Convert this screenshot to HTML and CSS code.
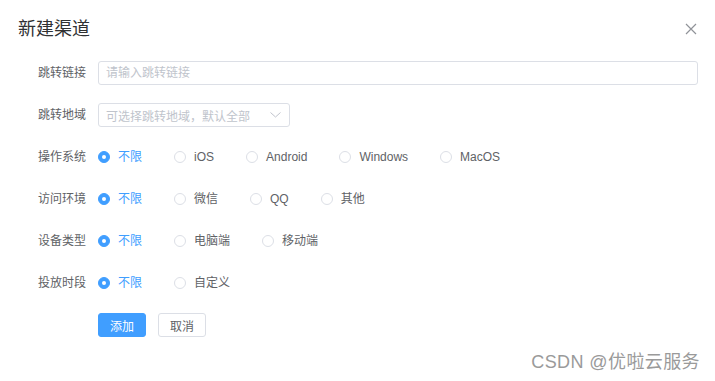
FILE: index.html
```html
<!DOCTYPE html>
<html lang="zh-CN">
<head>
  <meta charset="UTF-8" />
  <meta name="viewport" content="width=device-width, initial-scale=1" />
  <title>新建渠道</title>
  <link rel="stylesheet" href="styles.css">
</head>
<body>

  <div class="dialog">
    <div class="dialog-header">
      <span class="dialog-title">新建渠道</span>
      <button class="dialog-close" type="button" aria-label="关闭">
        <svg width="12" height="12" viewBox="0 0 12 12">
          <path d="M1 1 L11 11 M11 1 L1 11" stroke="#909399" stroke-width="1.2" fill="none" />
        </svg>
      </button>
    </div>

    <form class="form">
      <!-- 链接 -->
      <div class="form-item">
        <label class="form-label">跳转链接</label>
        <div class="form-content">
          <input class="input" type="text" placeholder="请输入跳转链接">
        </div>
      </div>

      <!-- 地域 -->
      <div class="form-item">
        <label class="form-label">跳转地域</label>
        <div class="form-content">
          <div class="select">
            <span class="select-placeholder">可选择跳转地域，默认全部</span>
            <svg class="select-arrow" width="11" height="6" viewBox="0 0 11 6">
              <path d="M0.5 0.5 L5.5 5 L10.5 0.5" stroke="#c0c4cc" stroke-width="1" fill="none" />
            </svg>
          </div>
        </div>
      </div>

      <div class="form-item">
        <label class="form-label">操作系统</label>
        <div class="form-content radio-group">
          <label class="radio checked"><span class="radio-inner"></span>不限</label>
          <label class="radio"><span class="radio-inner"></span>iOS</label>
          <label class="radio"><span class="radio-inner"></span>Android</label>
          <label class="radio"><span class="radio-inner"></span>Windows</label>
          <label class="radio"><span class="radio-inner"></span>MacOS</label>
        </div>
      </div>

      <div class="form-item">
        <label class="form-label">访问环境</label>
        <div class="form-content radio-group">
          <label class="radio checked"><span class="radio-inner"></span>不限</label>
          <label class="radio"><span class="radio-inner"></span>微信</label>
          <label class="radio"><span class="radio-inner"></span>QQ</label>
          <label class="radio"><span class="radio-inner"></span>其他</label>
        </div>
      </div>

      <div class="form-item">
        <label class="form-label">设备类型</label>
        <div class="form-content radio-group">
          <label class="radio checked"><span class="radio-inner"></span>不限</label>
          <label class="radio"><span class="radio-inner"></span>电脑端</label>
          <label class="radio"><span class="radio-inner"></span>移动端</label>
        </div>
      </div>

      <div class="form-item">
        <label class="form-label">投放时段</label>
        <div class="form-content radio-group">
          <label class="radio checked"><span class="radio-inner"></span>不限</label>
          <label class="radio"><span class="radio-inner"></span>自定义</label>
        </div>
      </div>

      <div class="form-item">
        <span class="form-label"></span>
        <div class="form-content buttons">
          <button class="btn btn-primary" type="button">添加</button>
          <button class="btn" type="button">取消</button>
        </div>
      </div>
    </form>
  </div>

  <div class="watermark">CSDN @优啦云服务</div>

</body>
</html>
```

FILE: styles.css
```css
body {
  font-family: 'Liberation Sans', 'Noto Sans CJK SC', sans-serif;
  margin: 0;
  background-color: #fff;
  color: #606266;
  font-size: 12px;
}

.dialog {
  position: relative;
  width: 715px;
  height: 381px;
}

.dialog-header {
  display: flex;
  justify-content: space-between;
  align-items: center;
  padding: 17px 18px 0 18px;
  height: 24px;
}

.dialog-title {
  font-size: 18px;
  line-height: 24px;
  color: #303133;
}

.dialog-close {
  border: none;
  background: none;
  padding: 0;
  width: 12px;
  height: 12px;
  display: flex;
}

.form {
  margin-top: 20px;
  padding-right: 17px;
}

.form-item {
  display: flex;
  align-items: center;
  height: 24px;
  margin-bottom: 18px;
}

.form-label {
  width: 86px;
  padding-right: 12px;
  text-align: right;
  line-height: 24px;
  color: #606266;
  flex-shrink: 0;
}

.form-content {
  flex-grow: 1;
  display: flex;
  align-items: center;
  height: 24px;
}

.input {
  box-sizing: border-box;
  width: 100%;
  height: 24px;
  border: 1px solid #dcdfe6;
  border-radius: 3px;
  padding: 0 7px;
  font-family: inherit;
  font-size: 12px;
  color: #606266;
  outline: none;
}

.input::placeholder {
  color: #c0c4cc;
}

.select {
  box-sizing: border-box;
  width: 192px;
  height: 24px;
  border: 1px solid #dcdfe6;
  border-radius: 3px;
  padding: 0 8px 0 7px;
  display: flex;
  align-items: center;
  justify-content: space-between;
}

.select-placeholder {
  color: #c0c4cc;
}

.radio-group .radio {
  display: flex;
  align-items: center;
  gap: 8px;
  margin-right: 32px;
  color: #606266;
  line-height: 24px;
}

.radio-inner {
  box-sizing: border-box;
  width: 12px;
  height: 12px;
  border: 1px solid #dcdfe6;
  border-radius: 50%;
  background: #fff;
  display: flex;
  align-items: center;
  justify-content: center;
}

.radio.checked {
  color: #409eff;
}

.radio.checked .radio-inner {
  background: #409eff;
  border-color: #409eff;
}

.radio.checked .radio-inner::after {
  content: "";
  width: 4px;
  height: 4px;
  border-radius: 50%;
  background: #fff;
}

.buttons {
  gap: 12px;
}

.btn {
  box-sizing: border-box;
  width: 48px;
  height: 24px;
  border: 1px solid #dcdfe6;
  border-radius: 3px;
  background: #fff;
  color: #606266;
  font-family: inherit;
  font-size: 12px;
  padding: 0;
}

.btn-primary {
  background: #409eff;
  border-color: #409eff;
  color: #fff;
}

.watermark {
  position: absolute;
  right: 15px;
  bottom: 8px;
  font-size: 18px;
  letter-spacing: 0.4px;
  color: #9a9a9a;
  text-shadow: 0 0 1px #fff;
}
```
